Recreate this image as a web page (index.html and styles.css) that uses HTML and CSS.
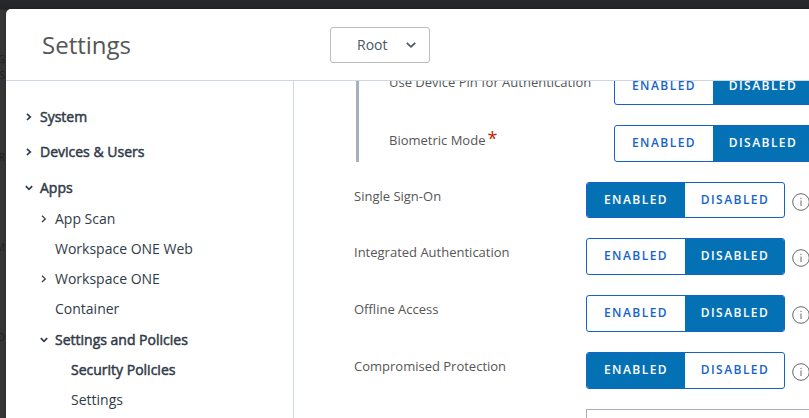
FILE: index.html
```html
<!DOCTYPE html>
<html lang="en">
<head>
<meta charset="utf-8">
<title>Settings</title>
<link rel="stylesheet" href="styles.css">
</head>
<body>
<svg width="0" height="0" class="defs">
  <symbol id="right" viewBox="0 0 8 8"><path d="M2 .8 5.3 3.9 2 7"/></symbol>
  <symbol id="down" viewBox="0 0 8 8"><path d="M.8 2.2 4 5.3 7.2 2.2"/></symbol>
  <symbol id="info" viewBox="0 0 18 18"><circle cx="9" cy="9" r="8.3"/><path d="M9 7.5V13M9 4.8v1.3"/></symbol>
</svg>
<div class="backdrop"><span>G</span><span class="s">S</span><span class="r">R</span><span class="m">M</span><span class="d">D</span></div>
<div class="dialog">
  <header class="header">
    <h1 class="title">Settings</h1>
    <button class="picker"><span>Root</span><svg class="chevron" viewBox="0 0 10 8"><path d="M.8 1.8 5 5.9 9.2 1.8"/></svg></button>
  </header>
  <div class="body">
    <nav class="nav">
      <a class="item strong"><svg><use href="#right"/></svg><span>System</span></a>
      <a class="item strong devices"><svg><use href="#right"/></svg><span>Devices &amp; Users</span></a>
      <a class="item strong apps"><svg><use href="#down"/></svg><span>Apps</span></a>
      <a class="item sub scan"><svg><use href="#right"/></svg><span>App Scan</span></a>
      <a class="item sub"><span>Workspace ONE Web</span></a>
      <a class="item sub"><svg><use href="#right"/></svg><span>Workspace ONE</span></a>
      <a class="item sub"><span>Container</span></a>
      <a class="item sub strong policies"><svg><use href="#down"/></svg><span>Settings and Policies</span></a>
      <a class="item leaf strong"><span>Security Policies</span></a>
      <a class="item leaf"><span>Settings</span></a>
    </nav>
    <main class="content">
      <div class="group">
        <div class="row"><span class="label">Use Device Pin for Authentication</span><div class="toggle"><span>ENABLED</span><span class="on">DISABLED</span></div></div>
        <div class="row"><span class="label required">Biometric Mode<b class="req">*</b></span><div class="toggle"><span>ENABLED</span><span class="on">DISABLED</span></div></div>
      </div>
      <div class="row first"><span class="label">Single Sign-On</span><div class="toggle"><span class="on">ENABLED</span><span>DISABLED</span></div><svg class="info"><use href="#info"/></svg></div>
      <div class="row"><span class="label">Integrated Authentication</span><div class="toggle"><span>ENABLED</span><span class="on">DISABLED</span></div><svg class="info"><use href="#info"/></svg></div>
      <div class="row"><span class="label">Offline Access</span><div class="toggle"><span>ENABLED</span><span class="on">DISABLED</span></div><svg class="info"><use href="#info"/></svg></div>
      <div class="row"><span class="label">Compromised Protection</span><div class="toggle"><span class="on">ENABLED</span><span>DISABLED</span></div><svg class="info"><use href="#info"/></svg></div>
      <div class="field"></div>
    </main>
  </div>
</div>
</body>
</html>
```
FILE: styles.css
```css
* { box-sizing: border-box; }
body {
  margin: 0;
  height: 418px;
  padding: 9px 0 0 6px;
  overflow: hidden;
  background: linear-gradient(#27292b, #222425 9px, #353535 10px);
  font-family: "Open Sans", "Noto Sans", sans-serif;
}
.defs { position: absolute; }
svg { fill: none; flex: none; }
.backdrop {
  position: absolute;
  top: 53px;
  left: 0;
  width: 5px;
  display: flex;
  flex-direction: column;
  align-items: flex-end;
  font-size: 10px;
  line-height: 12px;
  color: #222;
}
.backdrop .s { margin-top: 4px; }
.backdrop .r { margin-top: 70px; }
.backdrop .m, .backdrop .d { margin-top: 78px; }
.dialog {
  position: relative;
  height: 409px;
  display: flex;
  flex-direction: column;
  overflow: hidden;
  background: #fff;
  border-top-left-radius: 5px;
  box-shadow: 0 0 2px #222;
}
.header {
  height: 72px;
  flex: none;
  display: flex;
  align-items: center;
  border-bottom: 1px solid #ccd7e2;
}
.title {
  width: 324px;
  margin: 0;
  padding-left: 36px;
  font-size: 24px;
  font-weight: 400;
  line-height: 32px;
  color: #565656;
}
.picker {
  width: 100px;
  height: 36px;
  padding: 0 13px 0 26px;
  display: flex;
  align-items: center;
  justify-content: space-between;
  border: 1px solid #bbb;
  border-radius: 3px;
  background: #fff;
  font: 14px/20px "Open Sans", sans-serif;
  color: #485969;
}
.chevron { width: 10px; height: 8px; stroke: #485969; stroke-width: 1.7; }
.body { flex: 1; min-height: 0; display: flex; }
.nav {
  width: 288px;
  flex: none;
  padding-top: 21px;
  border-right: 1px solid #ccd7e2;
}
.item {
  height: 30px;
  padding-left: 19px;
  display: flex;
  align-items: center;
  font-size: 14px;
  line-height: 30px;
  color: #313b49;
}
.item svg { width: 8px; height: 8px; margin: 0 -8px 1px 0; stroke: #313b49; stroke-width: 1.3; }
.item span { margin-left: 15px; white-space: nowrap; }
.strong { -webkit-text-stroke: .5px #313b49; }
.item.strong svg { stroke-width: 1.7; }
.devices { margin-top: 5px; }
.apps { margin-top: 6px; }
.scan, .policies { margin-top: 1px; }
.sub { padding-left: 34px; }
.leaf { padding-left: 50px; }
.content { flex: 1; min-width: 0; overflow: hidden; padding-left: 60px; }
.group {
  width: 520px;
  margin: -13px 0 0 2px;
  height: 94px;
  padding-left: 30px;
  border-left: 3px solid #a9b0bb;
}
.row { display: flex; height: 57px; width: 500px; }
.first { height: 56px; margin-top: 20px; }
.label {
  width: 232px;
  flex: none;
  padding-top: 4px;
  font-size: 13px;
  line-height: 20px;
  color: #565656;
  white-space: nowrap;
}
.required { padding-top: 5px; }
.group .label { width: 225px; }
.req { margin-left: 2px; font-size: 18px; line-height: 1px; font-weight: 400; color: #c92100; }
.toggle {
  width: 199px;
  height: 37px;
  flex: none;
  display: flex;
  overflow: hidden;
  border: 1px solid #1464c8;
  border-radius: 3px;
}
.first .toggle { height: 36px; }
.toggle span {
  width: 98px;
  text-align: center;
  font-size: 12px;
  font-weight: 600;
  line-height: 34px;
  letter-spacing: 1.45px;
  color: #1464c8;
}
.toggle span:last-child { width: 99px; padding-left: 1px; }
.toggle .on { background: #0571b5; color: #fff; }
.info { width: 18px; height: 18px; margin: 11px 0 0 7px; stroke: #666; stroke-width: 1; }
.field { margin-left: 232px; height: 30px; width: 300px; border: 1px solid #a9b0bb; }
```
